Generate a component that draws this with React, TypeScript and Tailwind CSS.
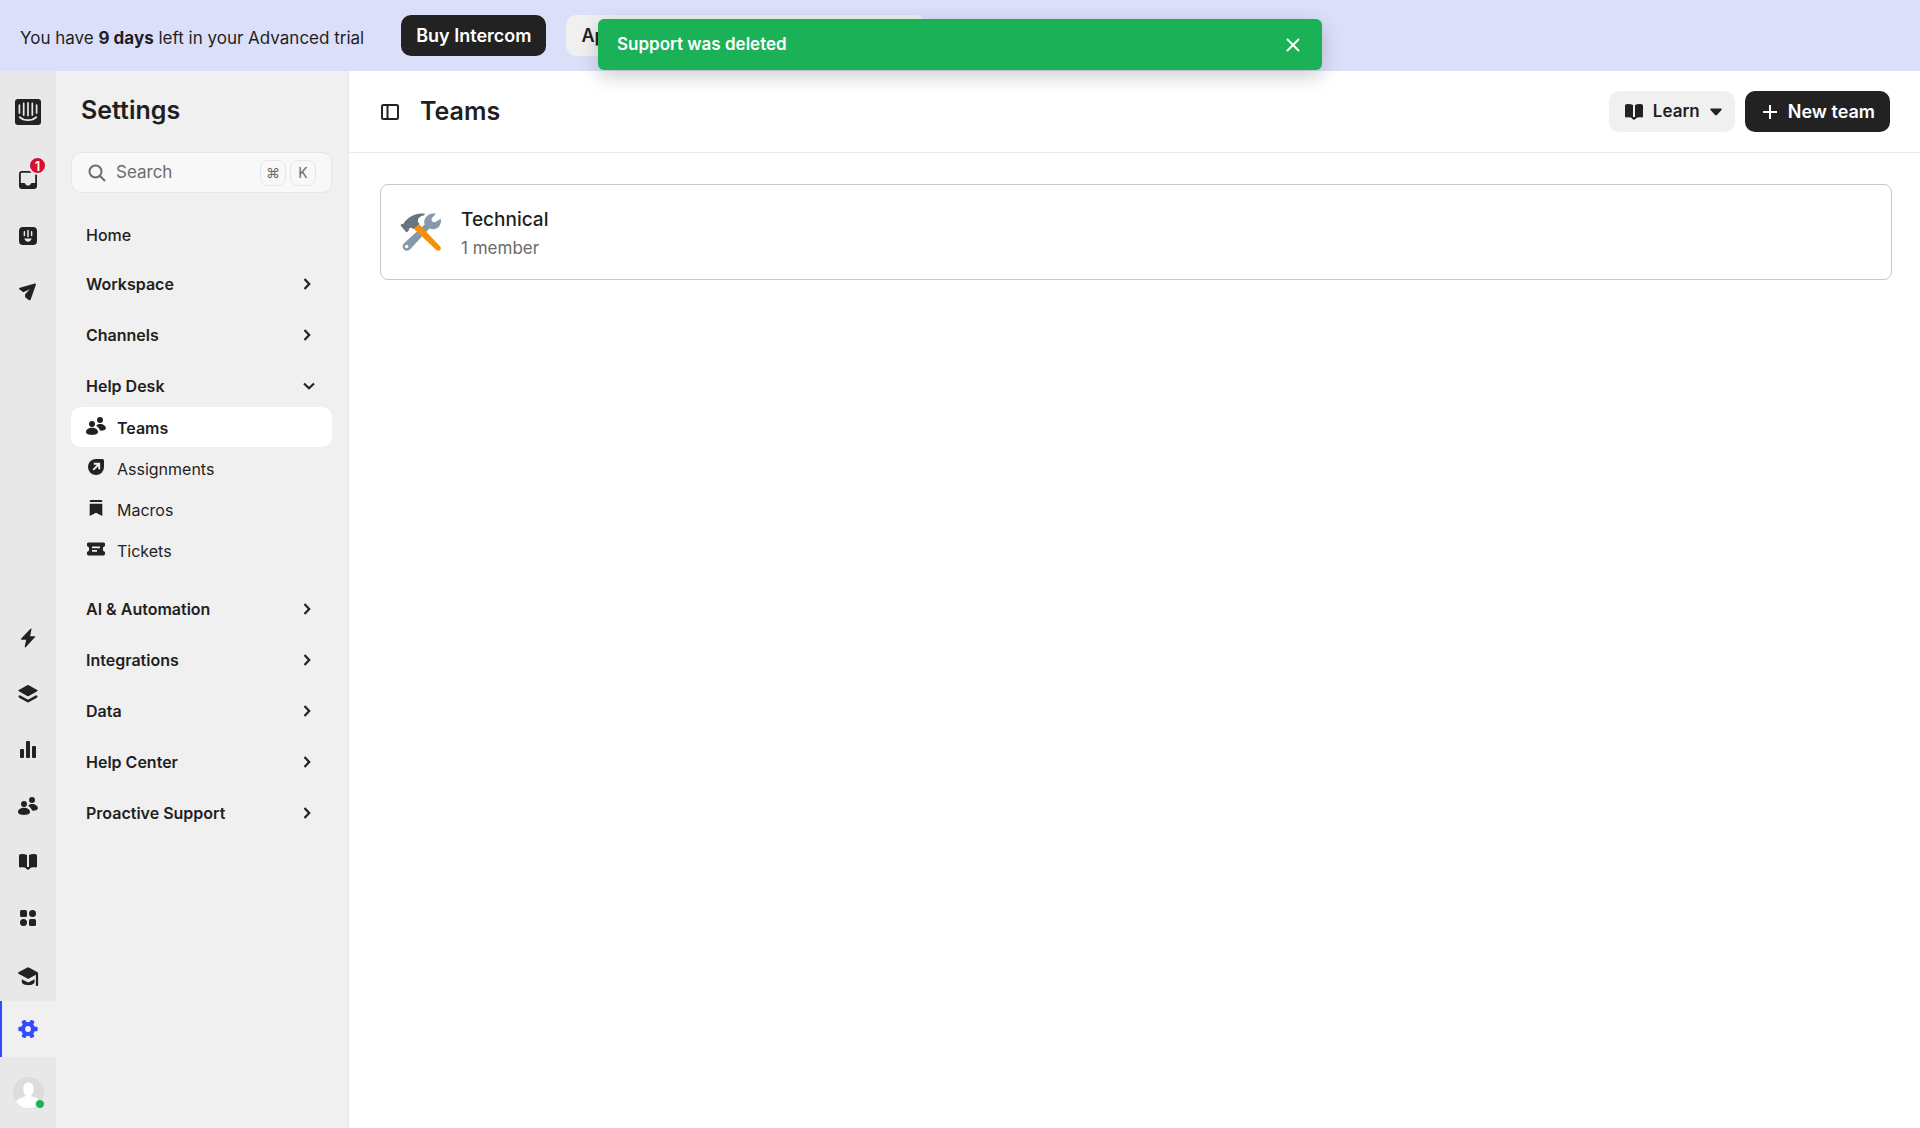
import type { ReactNode } from 'react';

interface NavSection {
  label: string;
  open?: boolean;
  items?: { label: string; icon: ReactNode; active?: boolean }[];
}

function Logo() {
  return (
    <svg width="26" height="26" viewBox="0 0 26 26" aria-hidden="true">
      <rect width="26" height="26" rx="3" fill="#222" />
      <path
        d="M4.400 6v8M8.700 4.300v11.600M13 3.900v12.600M17.300 4.300v11.600M21.600 6v8M4.600 18.200c4.600 4 12.200 4 16.800 0"
        fill="none"
        stroke="#e8e8e8"
        strokeWidth="1.700"
        strokeLinecap="round"
      />
    </svg>
  );
}

function InboxIcon() {
  return (
    <svg width="18" height="18" viewBox="0 0 18 18" fill="#222" aria-hidden="true">
      <path
        fillRule="evenodd"
        d="M3 0h12a3 3 0 0 1 3 3v12a3 3 0 0 1-3 3H3a3 3 0 0 1-3-3V3a3 3 0 0 1 3-3Zm-.2 1.800a1 1 0 0 0-1 1V12h3.400c.6 0 .9.300 1.200.900.500 1 1.400 1.700 2.600 1.700s2.100-.7 2.600-1.700c.3-.6.6-.9 1.200-.9h3.400V2.800a1 1 0 0 0-1-1Z"
      />
    </svg>
  );
}

function FinIcon() {
  return (
    <svg width="18" height="18" viewBox="0 0 18 18" aria-hidden="true">
      <rect width="18" height="18" rx="4" fill="#222" />
      <path d="M5.400 4.800v3.600M9 3.400v6.200M12.600 4.800v3.600" stroke="#e8e8e8" strokeWidth="1.500" strokeLinecap="round" />
      <path d="M5.300 11.500h7.400c-.5 2-1.900 3.200-3.700 3.200s-3.200-1.200-3.700-3.200Z" fill="#e8e8e8" />
    </svg>
  );
}

function SendIcon() {
  return (
    <svg width="18" height="18" viewBox="0 0 18 18" fill="#222" aria-hidden="true">
      <path d="M15.800.600.900 4.700c-1 .4-1.100 1.300-.3 1.900l3.800 2.600 6.400-3-4.700 5.100v2.900l3.600 2.900c.8.500 1.700.3 2-.7L16.900 1.700c.2-.8-.3-1.300-1.100-1.100Z" />
    </svg>
  );
}

function BoltIcon() {
  return (
    <svg width="18" height="20" viewBox="0 0 18 20" fill="#222" aria-hidden="true">
      <path d="M11.500.800 2.200 10.600c-.5.500-.2 1.100.4 1.100h4.600l-1.500 6.900c-.2.800.5 1.100 1 .6l9.200-9.900c.5-.5.2-1.100-.4-1.100h-4.400l1.400-6.900c.1-.7-.5-1-1-.5Z" />
    </svg>
  );
}

function LayersIcon() {
  return (
    <svg width="20" height="18" viewBox="0 0 20 18" fill="#222" aria-hidden="true">
      <path d="M9.200.300.800 4.900c-.7.400-.7 1 0 1.400l8.400 4.700c.5.300 1.100.3 1.600 0l8.400-4.700c.7-.4.7-1 0-1.400L10.800.300a1.600 1.600 0 0 0-1.600 0Z" />
      <path d="m1.800 11.700 8.200 4.500 8.200-4.500" fill="none" stroke="#222" strokeWidth="2.600" strokeLinecap="round" strokeLinejoin="round" />
    </svg>
  );
}

function ReportsIcon() {
  return (
    <svg width="16" height="18" viewBox="0 0 16 18" fill="#222" aria-hidden="true">
      <rect x="0" y="8" width="4" height="9" rx="1" />
      <rect x="6" y="0" width="4" height="17" rx="1" />
      <rect x="12" y="5" width="4" height="12" rx="1" />
    </svg>
  );
}

function PeopleIcon() {
  return (
    <svg width="20" height="18" viewBox="0 0 20 18" fill="#222" aria-hidden="true">
      <circle cx="6" cy="7" r="3" />
      <circle cx="14" cy="3" r="3" />
      <path d="M0 15c0-2.400 2.700-4.200 6-4.200s6 1.800 6 4.200c0 1.900-2.700 2.900-6 2.900S0 16.900 0 15Z" />
      <path d="M10.200 8.700c.9-1 2.200-1.600 3.800-1.600 3.200 0 5.900 2 5.900 4.200 0 1.700-2.600 2.500-5.800 2.300-.4-1.700-1.600-3.300-3.900-4.900Z" />
    </svg>
  );
}

function BookIcon() {
  return (
    <svg width="18" height="16" viewBox="0 0 18 16" fill="#222" aria-hidden="true">
      <path d="M0 1.800C0 .900.500.300 1.400.200 3.900-.2 6.300.100 8 1v13.200c-2-.9-4.300-1-6.700-.8C.500 13.500 0 13 0 12.200V1.800Z" />
      <path d="M18 1.800c0-.9-.5-1.500-1.400-1.600C14.100-.2 11.700.100 10 1v13.200c2-.9 4.300-1 6.700-.8.800.1 1.300-.4 1.300-1.200V1.800Z" />
      <path d="M6 13h6c-.6.600-1 1.300-1.500 1.900-.9 1-2.100 1-3 0C7 14.300 6.600 13.600 6 13Z" />
    </svg>
  );
}

function AppsIcon() {
  return (
    <svg width="16" height="16" viewBox="0 0 16 16" fill="#222" aria-hidden="true">
      <rect width="7" height="7" rx="1.500" />
      <circle cx="12.500" cy="3.500" r="3.500" />
      <circle cx="3.500" cy="12.500" r="3.500" />
      <rect x="9" y="9" width="7" height="7" rx="1.500" />
    </svg>
  );
}

function CapIcon() {
  return (
    <svg width="21" height="20" viewBox="0 0 21 20" fill="#222" aria-hidden="true">
      <path d="M9.400.600.500 5.300c-.6.400-.6 1 0 1.400l8.900 4.800c.5.300 1.100.3 1.600 0l6.900-3.700V18c0 .8.500 1.100 1.100 1.100s1.100-.4 1.100-1.100V6.500c0-.6-.2-.9-.6-1.200L11 .600a1.700 1.700 0 0 0-1.600 0Z" />
      <path d="M3.800 12.200v2.600c0 2.100 2.800 3.400 6.400 3.400s6.400-1.300 6.400-3.400v-2.600l-5.300 2.800c-.7.400-1.500.4-2.200 0l-5.300-2.800Z" />
    </svg>
  );
}

function GearIcon() {
  return (
    <svg width="20" height="20" viewBox="0 0 20 20" fill="#334bfa" aria-hidden="true">
      <circle cx="10" cy="10" r="7" />
      <rect x="0.300" y="7.800" width="19.400" height="4.400" rx="1.200" />
      <rect x="0.300" y="7.800" width="19.400" height="4.400" rx="1.200" transform="rotate(60 10 10)" />
      <rect x="0.300" y="7.800" width="19.400" height="4.400" rx="1.200" transform="rotate(120 10 10)" />
      <circle cx="10" cy="10" r="2.900" fill="#f0f0f0" />
    </svg>
  );
}

function AssignIcon() {
  return (
    <svg width="16" height="16" viewBox="0 0 16 16" aria-hidden="true">
      <path d="M8 0h6.500A1.500 1.500 0 0 1 16 1.500V8a8 8 0 1 1-8-8Z" fill="#222" />
      <path d="M5.800 4.800h5.400v5.400M11 5l-5.800 5.800" fill="none" stroke="#f0f0f0" strokeWidth="1.900" />
    </svg>
  );
}

function MacroIcon() {
  return (
    <svg width="14" height="16" viewBox="0 0 14 16" fill="#222" aria-hidden="true">
      <path d="M2 0h10c.8 0 1.300.600 1.300 1.300V2H.700v-.7C.700.600 1.200 0 2 0ZM.700 3.800h12.600V16L7 12.800.700 16Z" />
    </svg>
  );
}

function TicketIcon() {
  return (
    <svg width="18" height="14" viewBox="0 0 18 14" aria-hidden="true">
      <path d="M1.500.500h15c.8 0 1.500.600 1.500 1.400v2.200a3 3 0 0 0 0 5.800v2.200c0 .8-.7 1.400-1.500 1.400h-15c-.8 0-1.500-.6-1.500-1.400V9.900a3 3 0 0 0 0-5.800V1.900C0 1.100.700.500 1.500.500Z" fill="#222" />
      <path d="M5 5.300h8M5 8.900h5" stroke="#f0f0f0" strokeWidth="1.800" />
    </svg>
  );
}

function ChevronIcon({ open }: { open?: boolean }) {
  if (open) {
    return (
      <svg width="12" height="8" viewBox="0 0 12 8" fill="none" stroke="#222" strokeWidth="2.200" aria-hidden="true">
        <path d="m1 1.500 5 4.700 5-4.700" />
      </svg>
    );
  }
  return (
    <svg className="mr-1" width="8" height="12" viewBox="0 0 8 12" fill="none" stroke="#222" strokeWidth="2.200" aria-hidden="true">
      <path d="m1.500 1 4.700 5-4.700 5" />
    </svg>
  );
}

function ToolsIcon() {
  return (
    <svg width="42" height="40" viewBox="0 0 42 40" aria-hidden="true">
      {/* wrench */}
      <path
        fill="#8798a8"
        fillRule="evenodd"
        d="M25 6.500C27 2.600 31.200.700 36 1.600l-3.800 4.200c-1 1.300-1 2.800.2 3.800 1.100 1 2.700.8 3.900-.1l4.400-2.800c1.100 4.200-.8 8.200-4.300 9.800-2.400 1.100-4.800.9-7 .1L10.200 37.300c-1.800 1.800-4.700 2-6.400.3s-1.600-4.500.2-6.300L24.700 12.400c-.7-2-.6-4 .3-5.900ZM6.600 32.700a1.800 1.800 0 1 0 .1 3.600 1.800 1.800 0 0 0-.1-3.600Z"
      />
      {/* hammer handle */}
      <path fill="#f4900c" d="m12.500 15.400 5.700-4.200 22 23.200c1 1.100 1 2.700-.1 3.700-1 1-2.700 1-3.800 0Z" />
      {/* hammer head */}
      <path
        fill="#66757f"
        d="M.900 12.600c.7-.6 2-.3 2.800-1 .8-.6.600-1.700 1.500-2.500C9.500 4.700 15.500.400 24 1.600c1.100.2 1 1.500 0 1.600-3.800.9-6.200 2.600-6.100 5.700.1 1.200.8 1.900 1.600 2.800l-6.200 5.300c-1.300-1.200-2.600-1.600-3.700-.7-1.200 1-.4 2-1.300 2.800l-1 .8c-.6.500-1.200.3-1.700-.3L.800 13.700c-.3-.4-.3-.8.100-1.100Z"
      />
    </svg>
  );
}

const topApps = [
  { label: 'Fin AI Agent', icon: <FinIcon /> },
  { label: 'Outbound', icon: <SendIcon /> },
];

const bottomApps = [
  { label: 'Automation', icon: <BoltIcon /> },
  { label: 'Knowledge', icon: <LayersIcon /> },
  { label: 'Reports', icon: <ReportsIcon /> },
  { label: 'Contacts', icon: <PeopleIcon /> },
  { label: 'Articles', icon: <BookIcon /> },
  { label: 'Apps', icon: <AppsIcon /> },
];

const sections: NavSection[] = [
  { label: 'Workspace' },
  { label: 'Channels' },
  {
    label: 'Help Desk',
    open: true,
    items: [
      { label: 'Teams', icon: <PeopleIcon />, active: true },
      { label: 'Assignments', icon: <AssignIcon /> },
      { label: 'Macros', icon: <MacroIcon /> },
      { label: 'Tickets', icon: <TicketIcon /> },
    ],
  },
  { label: 'AI & Automation' },
  { label: 'Integrations' },
  { label: 'Data' },
  { label: 'Help Center' },
  { label: 'Proactive Support' },
];

function TrialBanner() {
  return (
    <div className="flex h-[71px] shrink-0 items-start bg-[#dcdff9] px-5 pt-[15px]">
      <p className="pt-[11px] text-[17px] leading-6">
        You have <strong className="font-bold">9 days</strong> left in your Advanced trial
      </p>
      <button className="ml-[37px] h-[41px] rounded-[10px] bg-[#222] px-[15px] text-[18px] font-semibold text-white">
        Buy Intercom
      </button>
      <button className="ml-5 h-[41px] w-[360px] rounded-[10px] bg-[#f0f0f0] px-[15px] text-left text-[18px] font-semibold">
        Apply for discount
      </button>
    </div>
  );
}

function Toast() {
  return (
    <div
      role="status"
      className="absolute top-[19px] left-1/2 flex h-[51px] w-[724px] -translate-x-1/2 items-center justify-between rounded-md bg-[#1bb157] pr-[21px] pl-[19px] text-white shadow-[0_6px_20px_rgba(0,0,0,0.2)]"
    >
      <span className="text-[17px] font-semibold">Support was deleted</span>
      <button aria-label="Dismiss" className="p-px">
        <svg width="14" height="14" viewBox="0 0 14 14" stroke="white" strokeWidth="2" strokeLinecap="round" aria-hidden="true">
          <path d="m1.500 1.500 11 11M12.500 1.500l-11 11" />
        </svg>
      </button>
    </div>
  );
}

function AppRail() {
  return (
    <nav aria-label="Apps" className="flex w-14 shrink-0 flex-col bg-[#e8e8e8]">
      <a href="#" aria-label="Intercom" className="flex h-[81px] items-center justify-center">
        <Logo />
      </a>
      <a href="#" aria-label="Inbox" className="relative flex h-14 items-center justify-center">
        <InboxIcon />
        <span className="absolute top-1 right-[9px] flex size-[19px] items-center justify-center rounded-full border-2 border-[#e8e8e8] bg-[#d5102f] text-[13px] leading-3 font-semibold text-white">
          1
        </span>
      </a>
      {topApps.map((app) => (
        <a key={app.label} href="#" aria-label={app.label} className="flex h-14 items-center justify-center">
          {app.icon}
        </a>
      ))}
      <div className="mt-auto">
        {bottomApps.map((app) => (
          <a key={app.label} href="#" aria-label={app.label} className="flex h-14 items-center justify-center">
            {app.icon}
          </a>
        ))}
        <a href="#" aria-label="Get set up" className="flex h-[55px] items-center justify-center pt-[7px]">
          <CapIcon />
        </a>
        <a
          href="#"
          aria-label="Settings"
          aria-current="page"
          className="flex h-14 items-center justify-center border-l-2 border-[#334bfa] bg-[#f0f0f0] pr-0.5"
        >
          <GearIcon />
        </a>
        <button aria-label="Profile" className="flex h-[71px] w-full items-center justify-center">
          <span className="relative">
            <svg width="31" height="31" viewBox="0 0 31 31" aria-hidden="true">
              <clipPath id="avatar">
                <circle cx="15.500" cy="15.500" r="15.500" />
              </clipPath>
              <g clipPath="url(#avatar)">
                <rect width="31" height="31" fill="#dcdcdc" />
                <path
                  fill="white"
                  d="M15.500 5.500c3.200 0 5.200 2.500 5.200 6.200 0 3-1 5.400-2.400 6.600v1c3.900.8 7.700 2.600 10.200 5.700V31h-26v-6c2.500-3.100 6.300-4.900 10.200-5.700v-1c-1.400-1.200-2.400-3.600-2.400-6.600 0-3.700 2-6.200 5.200-6.200Z"
                />
              </g>
            </svg>
            <span className="absolute -right-px -bottom-px size-[10px] rounded-full border border-[#e8e8e8] bg-[#1bb157]" />
          </span>
        </button>
      </div>
    </nav>
  );
}

function SettingsSidebar() {
  return (
    <aside className="w-[293px] shrink-0 border-r border-[#e6e6e6] bg-[#f0f0f0] pr-4 pl-[15px]">
      <h1 className="px-[10px] pt-6 text-[25px] leading-[30px] font-semibold">Settings</h1>
      <label className="mt-[27px] flex h-[41px] items-center rounded-[10px] border border-[#e6e6e6] bg-[#f8f8f8] pr-[15px] pl-4 text-[#6b6b6b]">
        <svg width="18" height="18" viewBox="0 0 18 18" fill="none" stroke="#6b6b6b" strokeWidth="2" aria-hidden="true">
          <circle cx="7.500" cy="7.500" r="6" />
          <path d="m12 12 5 5" />
        </svg>
        <input
          type="search"
          aria-label="Search"
          placeholder="Search"
          className="ml-2.5 w-0 grow bg-transparent pt-px text-[17px] outline-none placeholder:text-[#6b6b6b]"
        />
        <kbd className="flex size-[26px] items-center justify-center rounded-lg border border-[#e6e6e6] font-[Inter,sans-serif] text-[14px]">⌘</kbd>
        <kbd className="ml-1 flex size-[26px] items-center justify-center rounded-lg border border-[#e6e6e6] font-[Inter,sans-serif] text-[14px]">K</kbd>
      </label>
      <nav aria-label="Settings" className="mt-[26px] flex flex-col gap-4">
        <a href="#" className="flex h-[31px] items-center px-[15px] text-[16px] font-medium">
          Home
        </a>
        {sections.map((section) => (
          <div key={section.label}>
            <button
              aria-expanded={Boolean(section.open)}
              className="flex h-[35px] w-full items-center justify-between pr-[17px] pl-[15px] text-left text-[16px] font-semibold"
            >
              {section.label}
              <ChevronIcon open={section.open} />
            </button>
            {section.items && (
              <ul className="mt-1 mb-[5px] flex flex-col gap-px">
                {section.items.map((item) => (
                  <li key={item.label}>
                    <a
                      href="#"
                      aria-current={item.active ? 'page' : undefined}
                      className={
                        item.active
                          ? 'flex h-10 items-center gap-[11px] rounded-[10px] bg-white px-[15px] pt-px text-[16px] font-semibold'
                          : 'flex h-10 items-center gap-[11px] rounded-[10px] px-[15px] pt-px text-[16px]'
                      }
                    >
                      <span className="flex w-5 justify-center pb-1">{item.icon}</span>
                      {item.label}
                    </a>
                  </li>
                ))}
              </ul>
            )}
          </div>
        ))}
      </nav>
    </aside>
  );
}

function TeamsPage() {
  return (
    <main className="min-w-0 grow bg-white">
      <header className="flex h-[82px] items-center border-b border-[#ebebeb] pr-[30px] pl-8">
        <button aria-label="Toggle sidebar">
          <svg width="18" height="16" viewBox="0 0 18 16" fill="none" stroke="#222" strokeWidth="2" aria-hidden="true">
            <rect x="1" y="1" width="16" height="14" rx="1.500" />
            <path d="M6.500 1v14" />
          </svg>
        </button>
        <h2 className="ml-[21px] pb-0.5 text-[25px] leading-[30px] font-semibold">Teams</h2>
        <button className="ml-auto flex h-[41px] items-center rounded-[10px] bg-[#f0f0f0] pr-[13px] pl-4 text-[17px] font-semibold">
          <BookIcon />
          <span className="ml-2.5">Learn</span>
          <svg className="ml-2.5" width="12" height="8" viewBox="0 0 12 8" fill="#222" aria-hidden="true">
            <path d="M1.200.500h9.600c.8 0 1.200.800.7 1.400L6.900 7.100c-.5.600-1.300.6-1.800 0L.500 1.900C0 1.300.400.500 1.200.500Z" />
          </svg>
        </button>
        <button className="ml-2.5 flex h-[41px] items-center rounded-[10px] bg-[#222] pr-[15px] pl-4 text-[18px] font-semibold text-white">
          <svg width="18" height="16" viewBox="0 0 18 16" stroke="white" strokeWidth="2" aria-hidden="true">
            <path d="M9 1v14M2 8h14" />
          </svg>
          <span className="ml-[9px]">New team</span>
        </button>
      </header>
      <section className="pt-[31px] pr-7 pl-[31px]">
        <a href="#" className="flex h-24 items-center gap-[19px] rounded-lg border border-[#c9c9c9] px-[19px]">
          <ToolsIcon />
          <div className="pt-[3px]">
            <h3 className="text-[19px] leading-7 font-medium">Technical</h3>
            <p className="text-[17px] leading-7 text-[#6b6b6b]">1 member</p>
          </div>
        </a>
      </section>
    </main>
  );
}

export default function App() {
  return (
    <div className="relative flex min-h-screen flex-col font-[Inter,'Liberation_Sans',sans-serif] text-[#1f1f1f]">
      <TrialBanner />
      <div className="flex grow">
        <AppRail />
        <SettingsSidebar />
        <TeamsPage />
      </div>
      <Toast />
    </div>
  );
}
